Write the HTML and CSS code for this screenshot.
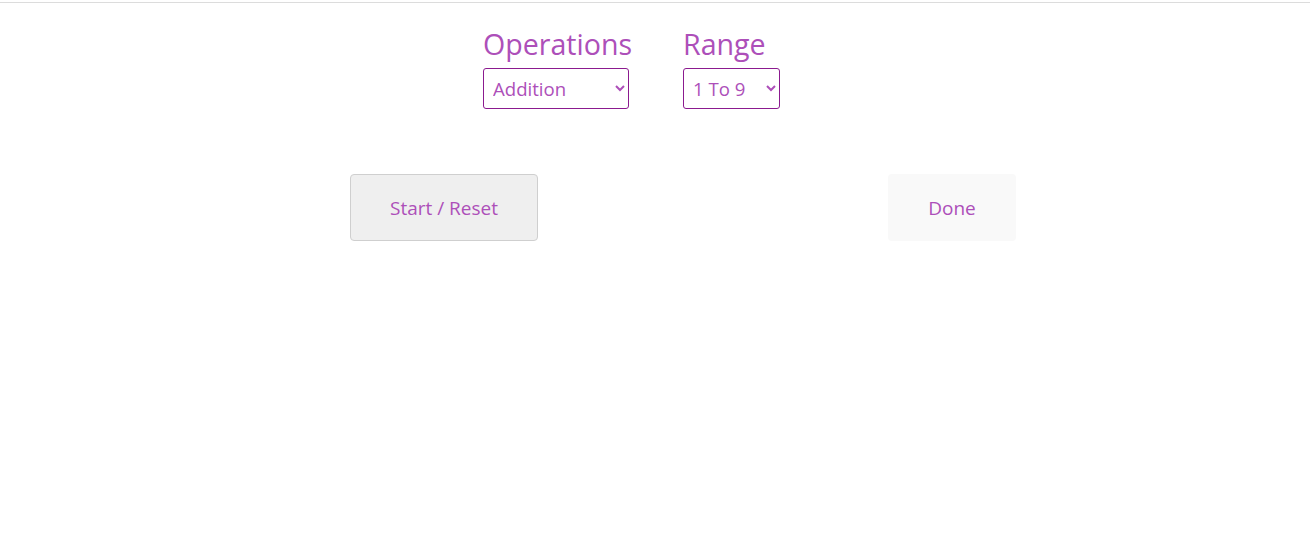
FILE: index.html
```html
<!DOCTYPE html>
<html>
<head>
<meta charset="utf-8">
<link rel="stylesheet" href="styles.css">
</head>
<body>
<div class="topline"></div>
<div class="controls">
  <div class="group group-ops">
    <label class="label">Operations</label>
    <select class="sel sel-ops">
      <option>Addition</option>
    </select>
  </div>
  <div class="group">
    <label class="label">Range</label>
    <select class="sel sel-range">
      <option>1 To 9</option>
    </select>
  </div>
</div>
<div class="buttons">
  <button class="btn btn-start">Start / Reset</button>
  <button class="btn btn-done">Done</button>
</div>
</body>
</html>
```
FILE: styles.css
```css
html, body {
  margin: 0;
  padding: 0;
  background: #fff;
  font-family: "Open Sans", "Noto Sans", sans-serif;
}
.topline {
  margin-top: 2px;
  height: 1px;
  background: #dcdcdc;
}
.controls {
  display: flex;
  gap: 54px;
  padding-left: 483px;
  padding-top: 22px;
}
.group {
  display: flex;
  flex-direction: column;
  align-items: flex-start;
}
.group-ops {
  width: 146px;
}
.label {
  font-size: 28.6px;
  line-height: 38px;
  margin-bottom: 5px;
  color: #ad4fb9;
  white-space: nowrap;
}
.sel {
  height: 41px;
  font-family: "Open Sans", "Noto Sans", sans-serif;
  font-size: 18.6px;
  color: #ad4fb9;
  background: #fff;
  border: 1px solid #8b1a8f;
  border-radius: 3px;
  padding: 0 4px 0 5px;
}
.sel-ops { width: 146px; }
.sel-range { width: 97px; }
.buttons {
  display: flex;
  padding-left: 350px;
  padding-top: 65px;
}
.btn {
  height: 67px;
  font-family: "Open Sans", "Noto Sans", sans-serif;
  font-size: 19px;
  color: #ad4fb9;
  border-radius: 4px;
  cursor: pointer;
}
.btn-start {
  width: 188px;
  background: #efefef;
  border: 1px solid #cfcfcf;
}
.btn-done {
  width: 128px;
  margin-left: 350px;
  background: #f9f9f9;
  border: none;
}
```
